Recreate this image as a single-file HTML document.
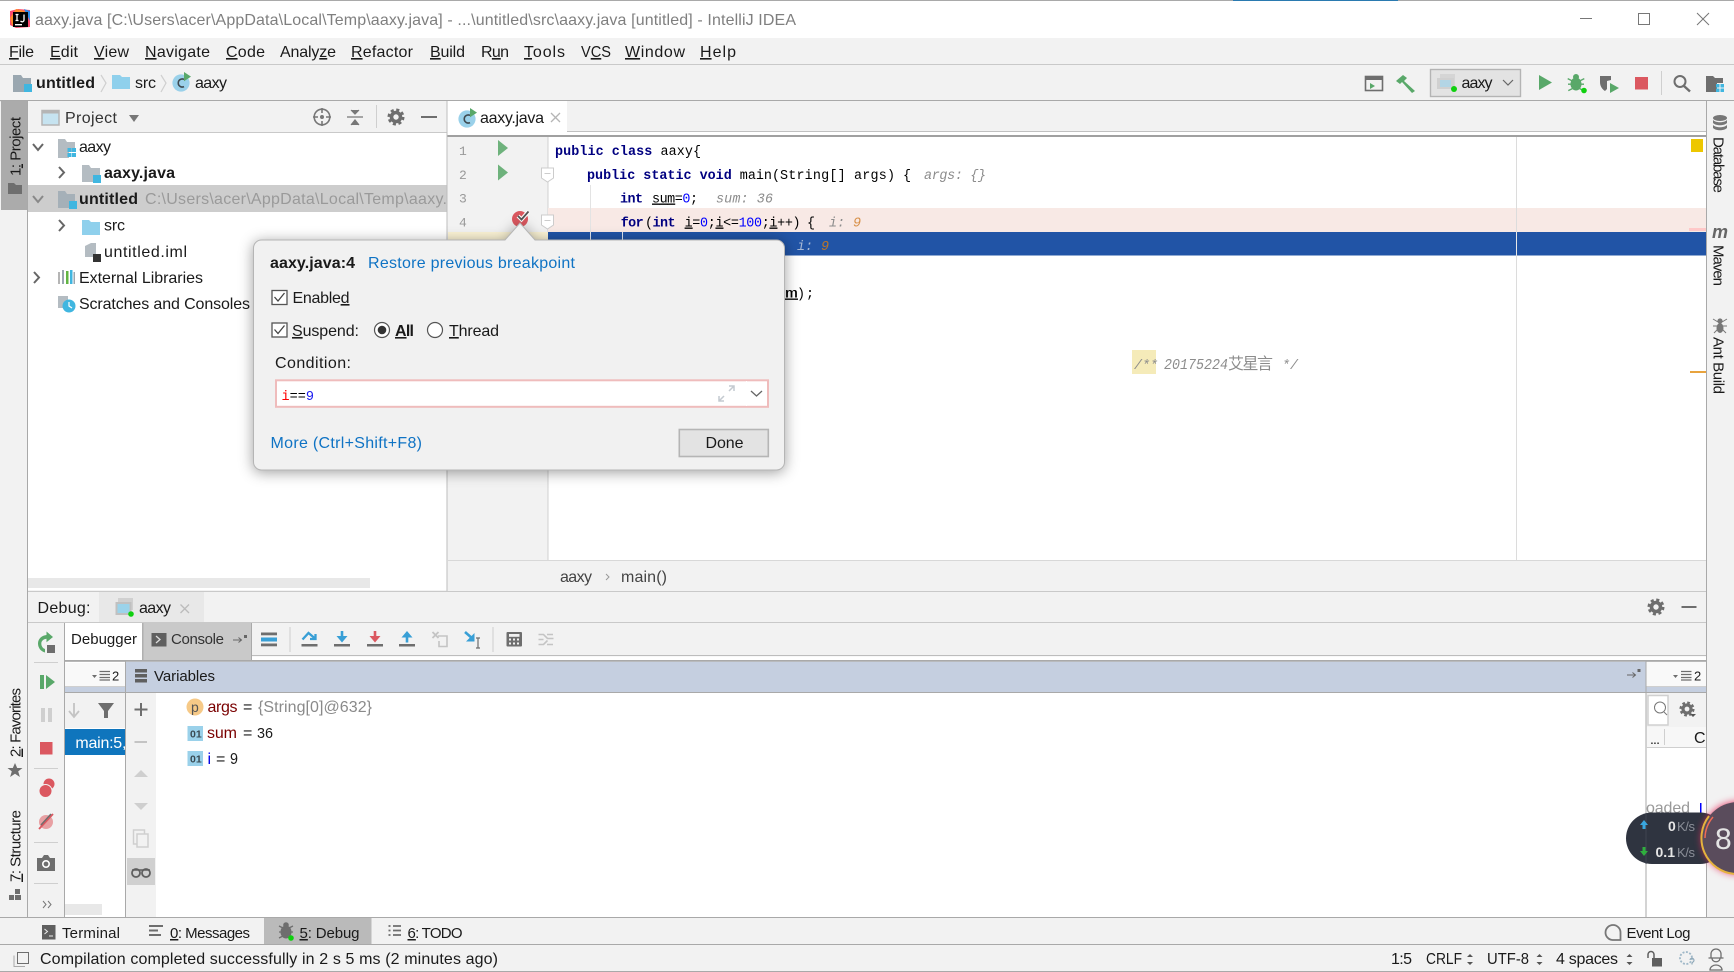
<!DOCTYPE html>
<html><head><meta charset="utf-8"><title>aaxy.java</title>
<style>
html,body{margin:0;padding:0;background:#f2f2f2;overflow:hidden}
svg{display:block}
text{font-family:"Liberation Sans","Noto Sans CJK SC",sans-serif;font-size:16px;fill:#1a1a1a;white-space:pre}
.m{font-family:"Liberation Mono","Noto Sans CJK SC",monospace;font-size:13.4px;fill:#000}
.k{font-weight:bold;fill:#000080}
.h{font-style:italic;fill:#8c8c8c}
.l{fill:#0f73c4}
.g{fill:#8a8a8a}
.u{text-decoration:underline}
.s{font-size:15px}
.ln{font-family:"Liberation Mono",monospace;font-size:13px;fill:#999}
</style></head><body>
<svg width="1734" height="972" viewBox="0 0 1734 972" xmlns="http://www.w3.org/2000/svg">
<defs>
<symbol id="gear" viewBox="-9 -9 18 18" overflow="visible"><circle r="4.5" fill="none" stroke="#6e6e6e" stroke-width="3.6"/><circle r="7" fill="none" stroke="#6e6e6e" stroke-width="3" stroke-dasharray="3 2.5"/></symbol>
<symbol id="c" viewBox="-10 -10 20 20" overflow="visible"><circle r="8.6" fill="#9ad1ea" cy="1"/><path d="M3 -2.6A4 4 0 1 0 3 4.6" fill="none" stroke="#3f4a50" stroke-width="1.6"/><path d="M3 -10l7 4.6-7 4.6z" fill="#59a869"/></symbol>
</defs>
<rect width="1734" height="972" fill="#f2f2f2"/>

<!-- Title bar -->
<rect width="1734" height="38" fill="#fff"/>
<rect width="1734" height="1" fill="#a9a9a9"/>
<rect x="1233" width="165" height="1" fill="#2a7ab0"/>
<g>
<path d="M10 11l8-2 12 1 0 17-14 1-6-3z" fill="#fc4a6f"/><path d="M10 18l6-9 9 2-8 16-5-2z" fill="#fe8a2a"/><path d="M24 9l6 2 0 10z" fill="#2f8ce8"/>
<rect x="13" y="12" width="15" height="15" fill="#000"/><rect x="15" y="24" width="7" height="1.4" fill="#fff"/>
<path d="M15.5 14.5h3M17 14.5v6M15.5 20.5h3M24 14.5v5.5a1.8 1.8 0 0 1-3.4.8" stroke="#fff" stroke-width="1.3" fill="none"/>
</g>
<text x="35" y="25" style="fill:#7f7f7f" textLength="761">aaxy.java [C:\Users\acer\AppData\Local\Temp\aaxy.java] - ...\untitled\src\aaxy.java [untitled] - IntelliJ IDEA</text>
<path d="M1580 18.5h12" stroke="#777" stroke-width="1"/>
<rect x="1638.5" y="13.5" width="11" height="11" fill="none" stroke="#777"/>
<path d="M1697 13l12 12M1709 13l-12 12" stroke="#777" stroke-width="1"/>

<!-- Menu -->
<g>
<text x="9" y="57" textLength="25"><tspan class="u">F</tspan>ile</text>
<text x="50" y="57" textLength="28"><tspan class="u">E</tspan>dit</text>
<text x="94" y="57" textLength="35"><tspan class="u">V</tspan>iew</text>
<text x="145" y="57" textLength="65"><tspan class="u">N</tspan>avigate</text>
<text x="226" y="57" textLength="39"><tspan class="u">C</tspan>ode</text>
<text x="280" y="57" textLength="56">Analy<tspan class="u">z</tspan>e</text>
<text x="351" y="57" textLength="62"><tspan class="u">R</tspan>efactor</text>
<text x="430" y="57" textLength="35"><tspan class="u">B</tspan>uild</text>
<text x="481" y="57" textLength="28">R<tspan class="u">u</tspan>n</text>
<text x="524" y="57" textLength="41"><tspan class="u">T</tspan>ools</text>
<text x="581" y="57" textLength="30" lengthAdjust="spacingAndGlyphs">V<tspan class="u">C</tspan>S</text>
<text x="625" y="57" textLength="60"><tspan class="u">W</tspan>indow</text>
<text x="700" y="57" textLength="36"><tspan class="u">H</tspan>elp</text>
</g>
<rect y="64" width="1734" height="1" fill="#c9c9c9"/>

<!-- Nav bar -->
<path d="M13 75h8l2 3h8v14H13z" fill="#9aa7b0"/><rect x="24" y="84" width="8" height="8" fill="#40b6e0"/>
<text x="36" y="88" style="font-weight:bold" textLength="59">untitled</text>
<path d="M101 75l5 8-5 9" fill="none" stroke="#cfcfcf" stroke-width="1.2"/>
<path d="M112 75h8l2 2h8v12h-18z" fill="#8fd0ec"/>
<text x="135" y="88" textLength="21">src</text>
<path d="M161 75l5 8-5 9" fill="none" stroke="#cfcfcf" stroke-width="1.2"/>
<use href="#c" x="171" y="72" width="20" height="20"/>
<text x="195" y="88" textLength="32">aaxy</text>

<!-- Nav right tools -->
<rect x="1365.5" y="76.5" width="17" height="14" fill="#f2f2f2" stroke="#6e6e6e" stroke-width="1.6"/><rect x="1365" y="76" width="18" height="4" fill="#6e6e6e"/><path d="M1370 83l5 3-5 3z" fill="#59a869"/>
<path d="M1396 81l7-6 4 3-3 3 11 10-3 2-10-11-2 2z" fill="#59a869"/>
<rect x="1430.5" y="69.5" width="90" height="27" fill="#e3e3e3" stroke="#b4b4b4" stroke-width="1.4"/>
<rect x="1440" y="74" width="15" height="13" fill="#d5d5d5"/><rect x="1437" y="78" width="17" height="11" fill="#d0d0d0"/><rect x="1440" y="80" width="11" height="7" fill="#b3d5e5"/>
<circle cx="1454" cy="89" r="3" fill="#0fd00f"/>
<text x="1461.5" y="88" textLength="31">aaxy</text>
<path d="M1503 80l5 5 5-5" fill="none" stroke="#666" stroke-width="1.2"/>
<path d="M1539 75l13 7.5-13 7.5z" fill="#59a869"/>
<g fill="#59a869"><ellipse cx="1576" cy="84" rx="5.5" ry="6.5"/><circle cx="1576" cy="77" r="3"/><path d="M1568 78l4 2-.6 1.2-4-2zM1584 78l-4 2 .6 1.2 4-2zM1568 83.500h4v1.400h-4zM1580 83.500h4v1.400h-4zM1568 90l4-2 .6 1.200-4 2zM1584 90l-4-2-.6 1.200 4 2z"/></g>
<circle cx="1584" cy="90.500" r="2.800" fill="#0fd00f"/>
<path d="M1600 76h11v4l-4 1v8l-2 2c-3-2-5-5-5-9z" fill="#6e6e6e"/><path d="M1610 83l9 5-9 5z" fill="#59a869"/>
<rect x="1635" y="77" width="13" height="12.500" fill="#db5860"/>
<rect x="1661" y="71" width="1" height="24" fill="#cfcfcf"/>
<circle cx="1680" cy="81.500" r="5.500" fill="none" stroke="#6e6e6e" stroke-width="2"/><path d="M1684 86l6 5.500" stroke="#6e6e6e" stroke-width="2.400"/>
<path d="M1706 76h7l2 2h8v5h-6v9h-11z" fill="#6e6e6e"/><rect x="1716" y="84" width="3.500" height="3.500" fill="#40b6e0"/><rect x="1720.500" y="84" width="3.500" height="3.500" fill="#40b6e0"/><rect x="1716" y="88.500" width="3.500" height="3.500" fill="#40b6e0"/><rect x="1720.500" y="88.500" width="3.500" height="3.500" fill="#40b6e0"/>
<rect y="100" width="1734" height="1.200" fill="#a9a9a9"/>

<!-- Left strip -->
<rect x="27" y="101" width="1" height="816" fill="#a9a9a9"/>
<rect x="1" y="101" width="26" height="109" fill="#ababab"/>
<text transform="translate(20.500,176) rotate(-90)" x="0" y="0" class="s" textLength="59">1<tspan class="u">:</tspan> Project</text>
<path d="M8 183h6l2 2h6v9H8z" fill="#6e6e6e"/>
<text transform="translate(20.500,757) rotate(-90)" class="s" textLength="69"><tspan class="u">2</tspan>: Favorites</text>
<path d="M15 763l2.200 5h5.300l-4.300 3.400 1.700 5.600-4.900-3.300-4.900 3.300 1.700-5.600-4.300-3.400h5.300z" fill="#6e6e6e"/>
<text transform="translate(20.500,882) rotate(-90)" class="s" textLength="72"><tspan class="u">7</tspan>: Structure</text>
<path d="M15 889h5v5h-5zM9 895h5v5H9zM15 895h6v5h-6z" fill="#6e6e6e"/>

<!-- Project panel -->
<rect x="28" y="101" width="419" height="31" fill="#f2f2f2"/>
<rect x="28" y="132" width="419" height="1.200" fill="#c9c9c9"/>
<rect x="42" y="110.500" width="17" height="14.500" fill="#c6e3f0" stroke="#b5b5b5" stroke-width="1.500"/><rect x="42" y="110.500" width="17" height="3" fill="#b5b5b5"/>
<text x="65" y="123" textLength="52" style="fill:#333">Project</text>
<path d="M129 115h10l-5 7z" fill="#777"/>
<circle cx="322" cy="117" r="7.800" fill="none" stroke="#777" stroke-width="1.600"/><circle cx="322" cy="117" r="2" fill="#777"/><path d="M322 108v5M322 121v5M313 117h5M326 117h5" stroke="#777" stroke-width="1.600"/>
<path d="M347 117h16M351 110l4 4 4-4M351 125l4-5 4 5" fill="#777" stroke="#777" stroke-width="1.200"/>
<rect x="376" y="105" width="1" height="23" fill="#cfcfcf"/>
<use href="#gear" x="387" y="108" width="18" height="18"/>
<rect x="421" y="116" width="16" height="2" fill="#6e6e6e"/>

<rect x="28" y="133" width="419" height="457" fill="#fff"/>
<rect x="28" y="185" width="419" height="27" fill="#cdcdcd"/>
<path d="M33 144l5 6 5-6" fill="none" stroke="#666" stroke-width="2"/>
<path d="M58 139h7l2 3h8v10h-6v6H58z" fill="#b4bcc2"/><rect x="67.500" y="148" width="4" height="4" fill="#40b6e0"/><rect x="72" y="148" width="4" height="4" fill="#40b6e0"/><rect x="67.500" y="153" width="4" height="4" fill="#40b6e0"/><rect x="72" y="153" width="4" height="4" fill="#40b6e0"/>
<text x="79" y="152" textLength="32">aaxy</text>
<path d="M59 167l5 5.500-5 5.500" fill="none" stroke="#666" stroke-width="2"/>
<path d="M82 165h7l2 3h9v14H82z" fill="#b4bcc2"/><rect x="93" y="175" width="8" height="8" fill="#40b6e0"/>
<text x="104" y="178" textLength="71" style="font-weight:bold">aaxy.java</text>
<path d="M33 196l5 6 5-6" fill="none" stroke="#888" stroke-width="2"/>
<path d="M58 191h7l2 3h8v14H58z" fill="#a5b0b8"/><rect x="69" y="201" width="8" height="8" fill="#40b6e0"/>
<text x="79" y="204" textLength="59" style="font-weight:bold">untitled</text>
<text x="145" y="204" style="fill:#9a9a9a" textLength="302">C:\Users\acer\AppData\Local\Temp\aaxy.</text>
<path d="M59 220l5 5.500-5 5.500" fill="none" stroke="#666" stroke-width="2"/>
<path d="M82 220h7l2 2h9v13H82z" fill="#8fd0ec"/>
<text x="104" y="230.500" textLength="21">src</text>
<path d="M85 246l6-3h5v14H85z" fill="#b4bcc2"/><rect x="93" y="254" width="8" height="8" fill="#333"/>
<text x="104" y="257" textLength="83">untitled.iml</text>
<path d="M34 272l5 5.500-5 5.500" fill="none" stroke="#666" stroke-width="2"/>
<g><rect x="58" y="272" width="2" height="12" fill="#b5b5b5"/><rect x="62" y="270" width="2" height="14" fill="#9aa7b0"/><rect x="66" y="271" width="2.500" height="13" fill="#62b543"/><rect x="70" y="270" width="2.500" height="14" fill="#40b6e0"/><rect x="73.500" y="272" width="1.500" height="12" fill="#9aa7b0"/></g>
<text x="79" y="283" textLength="124">External Libraries</text>
<path d="M58 296h10v12H58z" fill="#b4bcc2"/><circle cx="69" cy="306" r="6.500" fill="#40b6e0"/><path d="M69 302v4l3 2" stroke="#fff" fill="none" stroke-width="1.200"/>
<text x="79" y="309" textLength="171">Scratches and Consoles</text>
<rect x="28" y="578" width="342" height="10" fill="#e8e8e8"/>

<!-- Editor tabs -->
<rect x="447" y="101" width="1259" height="30" fill="#f2f2f2"/>
<rect x="447" y="131" width="1259" height="1" fill="#c0c0c0"/>
<rect x="447" y="132" width="1259" height="3" fill="#fff"/>
<rect x="447" y="135" width="1259" height="2" fill="#a0a0a0"/>
<rect x="447" y="101" width="120" height="34" fill="#fff"/>
<rect x="446.500" y="101" width="1" height="490" fill="#bdbdbd"/>
<use href="#c" x="457" y="108" width="20" height="20"/>
<text x="480" y="123" textLength="64">aaxy.java</text>
<path d="M551 113l9 9M560 113l-9 9" stroke="#b5b5b5" stroke-width="1.300"/>

<!-- Editor -->
<rect x="448" y="137" width="1258" height="423" fill="#fff"/>
<rect x="448" y="137" width="100" height="423" fill="#f2f2f2"/>
<rect x="547.500" y="137" width="1" height="423" fill="#d0d0d0"/>
<rect x="548" y="208" width="1158" height="24" fill="#f8e9e5"/>
<rect x="448" y="232" width="100" height="24" fill="#fbf3d5"/>
<rect x="548" y="232" width="1158" height="23.500" fill="#2154a6"/>
<rect x="1516" y="137" width="1" height="423" fill="#dcdcdc"/>
<rect x="1516" y="232" width="1" height="23.500" fill="#e8e8e8"/>
<rect x="590" y="185" width="1" height="47" fill="#e3e3e3"/>
<rect x="590" y="232" width="1" height="24" fill="#dfe6f2"/>
<rect x="622" y="232" width="1" height="24" fill="#dfe6f2"/>
<text x="459" y="155" class="ln">1</text><text x="459" y="179" class="ln">2</text><text x="459" y="202.500" class="ln">3</text><text x="459" y="226.500" class="ln">4</text>
<path d="M498 140l10 8-10 8zM498 164.500l10 8-10 8z" fill="#6eb27c"/>
<path d="M541.500 168h12v10l-6 4-6-4z" fill="#fff" stroke="#ccc"/><path d="M544.500 173.500h6" stroke="#ccc"/>
<path d="M541.500 215h12v10l-6 4-6-4z" fill="#fff" stroke="#ccc"/><path d="M544.500 220.500h6" stroke="#ccc"/>
<circle cx="520" cy="219" r="8" fill="#db5860"/>
<path d="M518 216l3.500 3.500 7-8" stroke="#fff" stroke-width="4" fill="none"/><path d="M518 216l3.500 3.500 7-8" stroke="#555" stroke-width="1.800" fill="none"/>

<text x="555" y="155" class="m" textLength="146"><tspan class="k">public class</tspan> aaxy{</text>
<text x="587" y="179" class="m" textLength="193"><tspan class="k">public static void</tspan> main(</text>
<text x="780" y="179" class="m" textLength="115">String[] args)</text>
<text x="903" y="179" class="m">{</text>
<text x="924" y="179" class="m h" textLength="62">args: {}</text>
<text x="620" y="202.500" class="m k" textLength="23">int</text>
<text x="652" y="202.500" class="m" textLength="46"><tspan class="u">sum</tspan>=<tspan style="fill:#00f">0</tspan>;</text>
<text x="716" y="202.500" class="m h" textLength="57">sum: 36</text>
<text x="620.700" y="226.500" class="m k" textLength="23">for</text>
<text x="645" y="226.500" class="m">(</text>
<text x="652.500" y="226.500" class="m k" textLength="23">int</text>
<text x="684.600" y="226.500" class="m" textLength="116"><tspan class="u">i</tspan>=<tspan style="fill:#00f">0</tspan>;<tspan class="u">i</tspan>&lt;=<tspan style="fill:#00f">100</tspan>;<tspan class="u">i</tspan>++)</text>
<text x="807" y="226.500" class="m">{</text>
<text x="829" y="226.500" class="m h">i:</text><text x="853" y="226.500" class="m h" style="fill:#d8914a">9</text>
<text x="797" y="250" class="m h" style="fill:#a8b8d4">i:</text><text x="821" y="250" class="m h" style="fill:#b8752c">9</text>
<text x="785" y="297.500" class="m u" textLength="13" lengthAdjust="spacingAndGlyphs">m</text><text x="797" y="297.500" class="m">)</text><text x="806" y="297.500" class="m">;</text>
<rect x="1132" y="350" width="24" height="24" fill="#f5ebb9"/>
<text x="1134" y="369" class="m h" textLength="24">/**</text>
<text x="1164" y="369" class="m h" style="font-size:15px" textLength="64" lengthAdjust="spacingAndGlyphs">20175224</text>
<text x="1228" y="369" style="font-size:16px;fill:#8c8c8c" textLength="45">艾星言</text>
<text x="1282" y="369" class="m h" textLength="16">*/</text>

<!-- stripe -->
<rect x="1691" y="139" width="12" height="13" fill="#edc700"/>
<rect x="1689" y="228" width="17" height="3" fill="#ffc8c8"/>
<rect x="1690" y="371" width="16" height="2" fill="#e8a33d"/>

<!-- Breadcrumb -->
<rect x="448" y="560" width="1258" height="31" fill="#f2f2f2"/>
<rect x="448" y="560" width="1258" height="1" fill="#d8d8d8"/>
<text x="560" y="582" textLength="32" style="fill:#444">aaxy</text>
<path d="M606 574l3 3-3 3" fill="none" stroke="#999"/>
<text x="621" y="582" textLength="46" style="fill:#444">main()</text>

<!-- Right strip -->
<rect x="1706" y="101" width="1" height="816" fill="#a9a9a9"/>
<rect x="1707" y="101" width="27" height="816" fill="#f2f2f2"/>
<g fill="#777"><ellipse cx="1720" cy="118" rx="7" ry="3"/><path d="M1713 120c3 3 11 3 14 0v3c-3 3-11 3-14 0zM1713 125c3 3 11 3 14 0v3c-3 3-11 3-14 0z"/></g>
<text transform="translate(1713.500,137) rotate(90)" class="s" textLength="56">Database</text>
<text x="1712" y="238" style="font:italic bold 18px 'Liberation Sans';fill:#666" textLength="17">m</text>
<text transform="translate(1713.500,245) rotate(90)" class="s" textLength="41">Maven</text>
<g fill="#777"><ellipse cx="1720" cy="328" rx="3.500" ry="5"/><circle cx="1720" cy="321" r="2.600"/><path d="M1713 319l5 3M1727 319l-5 3M1713 326h5M1727 326h-5M1714 333l4-4M1726 333l-4-4" stroke="#777"/></g>
<text transform="translate(1713.500,337) rotate(90)" class="s" textLength="57">Ant Build</text>

<!-- Debug header -->
<rect x="28" y="591" width="1678" height="1" fill="#c9c9c9"/>
<rect x="28" y="622" width="1678" height="1" fill="#c9c9c9"/>
<text x="37.500" y="613" textLength="53">Debug:</text>
<rect x="99" y="592" width="105" height="30" fill="#e8e8e8"/>
<rect x="118" y="598" width="15" height="12" fill="#d0d0d0"/><rect x="115.500" y="602" width="16" height="13" fill="#c0c0c0"/><rect x="117.500" y="604" width="12" height="9" fill="#9bd3ea"/><circle cx="131" cy="614" r="2.800" fill="#0fd00f"/>
<text x="139" y="613" textLength="32">aaxy</text>
<path d="M180.500 604.500l8.500 8.500M189 604.500l-8.500 8.500" stroke="#bbb" stroke-width="1.300"/>
<use href="#gear" x="1647" y="598" width="18" height="18"/>
<rect x="1681.500" y="606" width="15" height="2" fill="#6e6e6e"/>

<!-- Debug tool column -->
<rect x="64" y="623" width="1" height="294" fill="#a9a9a9"/>
<path d="M53 637l-6.500-5.500v3.500c-5 .5-8.500 4-8.500 8.500s3 8 7 9v-3.500c-2.300-.7-3.700-3-3.700-5.500s2-4.500 5.200-4.800v3.600z" fill="#59a869"/>
<rect x="47" y="645" width="8" height="8" fill="#6e6e6e"/>
<rect x="34" y="662" width="24" height="1" fill="#cfcfcf"/>
<rect x="40" y="675" width="4" height="14" fill="#59a869"/><path d="M46 675l9 7-9 7z" fill="#59a869"/>
<rect x="41" y="708" width="4" height="14" fill="#cfcfcf"/><rect x="48" y="708" width="4" height="14" fill="#cfcfcf"/>
<rect x="40" y="742" width="12.500" height="12.500" fill="#db5860"/>
<rect x="34" y="768" width="24" height="1" fill="#cfcfcf"/>
<circle cx="49" cy="784" r="5.500" fill="#db5860"/><circle cx="45.500" cy="791" r="6.500" fill="#db5860" stroke="#f2f2f2"/>
<circle cx="46" cy="822" r="7" fill="#e8a0a3"/><path d="M39 829l14-15" stroke="#db5860" stroke-width="1.800"/><path d="M41 825l10-11" stroke="#6e6e6e" stroke-width="1.500"/>
<rect x="34" y="842" width="24" height="1" fill="#cfcfcf"/>
<path d="M37 858h5l2-3h4l2 3h5v13H37z" fill="#6e6e6e"/><circle cx="46" cy="864" r="3.200" fill="none" stroke="#fff" stroke-width="1.600"/>
<rect x="34" y="883" width="24" height="1" fill="#cfcfcf"/>
<path d="M43 901l3 3.500-3 3.500M48 901l3 3.500-3 3.500" fill="none" stroke="#777"/>

<!-- Debugger tabs -->
<rect x="65" y="623" width="77" height="38" fill="#fff"/>
<text x="71" y="644" class="s" textLength="66">Debugger</text>
<rect x="142" y="623" width="109.500" height="37" fill="#c9c9c9"/>
<rect x="142" y="623" width="1.500" height="37" fill="#b0b0b0"/><rect x="251" y="623" width="1" height="37" fill="#a9a9a9"/>
<rect x="151.500" y="633" width="15" height="13.500" fill="#5f5f5f"/><path d="M156 636l4 3.500-4 3.500" fill="none" stroke="#ddd" stroke-width="1.300"/>
<text x="171" y="644" class="s" textLength="53" style="fill:#333">Console</text>
<path d="M233 640h8M238.500 637.500l3 2.500-3 2.500" fill="none" stroke="#666"/><rect x="244" y="635" width="3" height="3" fill="#666"/>
<rect x="261" y="632.500" width="16" height="2.800" fill="#6e6e6e"/><rect x="261" y="637.500" width="16" height="4" fill="#389fd6"/><rect x="261" y="643.500" width="16" height="2.800" fill="#6e6e6e"/>
<rect x="289.500" y="627" width="1" height="25" fill="#cfcfcf"/>
<path d="M302.500 639.500l6-6.500 6 5M310 639h5.500v-5" fill="none" stroke="#389fd6" stroke-width="2.300"/><rect x="301.500" y="644" width="16" height="2.500" fill="#6e6e6e"/>
<path d="M342 631v7.500" stroke="#389fd6" stroke-width="2.600"/><path d="M336.500 636h11l-5.500 6.500z" fill="#389fd6"/><rect x="334" y="644" width="16" height="2.500" fill="#6e6e6e"/>
<path d="M375 631v7.500" stroke="#db5860" stroke-width="2.600"/><path d="M369.500 636h11l-5.500 6.500z" fill="#db5860"/><rect x="367" y="644" width="16" height="2.500" fill="#6e6e6e"/>
<path d="M407 642.500v-7.500" stroke="#389fd6" stroke-width="2.600"/><path d="M401.500 637.500h11l-5.500-6.500z" fill="#389fd6"/><rect x="399" y="644" width="16" height="2.500" fill="#6e6e6e"/>
<path d="M432.500 632l6 6M438.500 632l-6 6" stroke="#c4c4c4" stroke-width="1.800"/><path d="M438 636h9v10.500h-8v-5.500" fill="none" stroke="#c4c4c4" stroke-width="1.600"/>
<path d="M465 632l8 7" stroke="#389fd6" stroke-width="2.600"/><path d="M474.500 633v8.500h-8.500z" fill="#389fd6"/><path d="M476 638h4M476 648h4M478 638v10" stroke="#6e6e6e" stroke-width="1.200"/>
<rect x="492.500" y="627" width="1" height="25" fill="#cfcfcf"/>
<rect x="506.500" y="632" width="15.500" height="14.500" rx="1" fill="#6e6e6e"/><rect x="509" y="634" width="10.500" height="2.800" fill="#f2f2f2"/><path d="M509 638.500h2v2h-2zM513 638.500h2v2h-2zM517 638.500h2v2h-2zM509 642.500h2v2h-2zM513 642.500h2v2h-2zM517 642.500h2v2h-2z" fill="#f2f2f2"/>
<path d="M538.500 634.500h5l4 4h6M538.500 639.500h5M538.500 644.500h5l4-4M553 634.500h-6M553 644.500h-6" fill="none" stroke="#c4c4c4" stroke-width="1.600"/>
<rect x="252" y="655" width="1454" height="1.200" fill="#bdbdbd"/>
<rect x="252" y="656.200" width="1454" height="4" fill="#fff"/>
<rect x="65" y="660" width="1641" height="1.800" fill="#a9a9a9"/>

<!-- Frames + variables panes -->
<rect x="65" y="662" width="60" height="25" fill="#f9f9f9"/>
<rect x="65" y="662" width="60" height="1" fill="#fff"/>
<rect x="65" y="686" width="60" height="1" fill="#cfcfcf"/>
<rect x="65" y="687" width="60" height="5" fill="#c5cfe0"/>
<rect x="125" y="661.800" width="1521" height="30.200" fill="#c5cfe0"/>
<rect x="65" y="692" width="1641" height="1" fill="#a9a9a9"/>
<path d="M92 675h5l-2.500 3z" fill="#6e6e6e"/>
<path d="M99.500 671.500h10.500M99.500 674.500h10.500M99.500 677.500h10.500M99.500 680h10.500" stroke="#6e6e6e" stroke-width="1.200"/>
<text x="112" y="680.500" style="font-size:13px" textLength="6.500">2</text>
<rect x="135" y="669" width="12" height="3.500" fill="#5f5f5f"/><rect x="135" y="674" width="12" height="3.500" fill="#5f5f5f"/><rect x="135" y="679" width="12" height="3.500" fill="#5f5f5f"/>
<text x="154" y="681" class="s" textLength="61">Variables</text>
<path d="M1627 675h8M1632.500 672.500l3 2.500-3 2.500" fill="none" stroke="#666"/><rect x="1637.500" y="669" width="3" height="3" fill="#666"/>

<rect x="65" y="693" width="60" height="224" fill="#fff"/>
<rect x="65" y="693" width="60" height="35" fill="#f2f2f2"/>
<path d="M74 703v14M69 711l5 6 5-6" fill="none" stroke="#c4c4c4" stroke-width="1.800"/>
<path d="M98 703h16l-6 8v7h-4v-7z" fill="#6e6e6e"/>
<rect x="65" y="729" width="60" height="26" fill="#0f75bd"/>
<svg x="65" y="729" width="60" height="26"><text x="10.400" y="19" style="fill:#fff" textLength="51">main:5,</text></svg>
<rect x="65" y="904" width="37" height="11" fill="#e8e8e8"/>
<rect x="125" y="661" width="1" height="256" fill="#a9a9a9"/>
<rect x="126" y="693" width="30" height="224" fill="#f2f2f2"/>
<rect x="156" y="693" width="1490" height="224" fill="#fff"/>
<path d="M141 703v13M134.500 709.500h13" stroke="#6e6e6e" stroke-width="2"/>
<path d="M134.500 742h12.500" stroke="#c4c4c4" stroke-width="2"/>
<path d="M134 777l7-7 7 7z" fill="#cfcfcf"/><path d="M134 803l7 7 7-7z" fill="#cfcfcf"/>
<rect x="133.500" y="830" width="11" height="14" fill="none" stroke="#cfcfcf" stroke-width="1.500"/><rect x="137" y="834" width="11" height="13" fill="#f2f2f2" stroke="#cfcfcf" stroke-width="1.500"/>
<rect x="127" y="858" width="28" height="27" fill="#d0d0d0"/>
<circle cx="136" cy="873" r="4" fill="none" stroke="#5f5f5f" stroke-width="1.800"/><circle cx="146" cy="873" r="4" fill="none" stroke="#5f5f5f" stroke-width="1.800"/><path d="M132 870h18" stroke="#5f5f5f" stroke-width="1.400"/>

<circle cx="195" cy="707" r="8.500" fill="#f6c987"/><text x="191" y="712" style="font-size:14px;fill:#555">p</text>
<text x="207.500" y="712" textLength="30" style="fill:#7a0000">args</text>
<text x="243" y="712">=</text>
<text x="258" y="712" textLength="114" style="fill:#8a8a8a">{String[0]@632}</text>
<rect x="187.500" y="726" width="15.500" height="15" fill="#9ad1ea"/><text x="190" y="737.500" style="font-size:10.500px;font-weight:bold;fill:#3a4a52">01</text>
<text x="207" y="738" textLength="30" style="fill:#7a0000">sum</text><text x="243" y="738">=</text><text x="257" y="738" style="font-size:15px" textLength="16" lengthAdjust="spacingAndGlyphs">36</text>
<rect x="187.500" y="751" width="15.500" height="15" fill="#9ad1ea"/><text x="190" y="762.500" style="font-size:10.500px;font-weight:bold;fill:#3a4a52">01</text>
<text x="207.500" y="764" style="fill:#0000e6">i</text><text x="216" y="764">=</text><text x="230" y="764" textLength="8" lengthAdjust="spacingAndGlyphs">9</text>

<!-- right debug pane -->
<rect x="1646" y="662" width="60" height="255" fill="#fff"/>
<rect x="1646" y="662" width="60" height="25" fill="#f9f9f9"/>
<rect x="1646" y="686" width="60" height="1" fill="#cfcfcf"/>
<rect x="1646" y="687" width="60" height="5" fill="#c5cfe0"/>
<rect x="1646" y="692" width="60" height="1" fill="#a9a9a9"/>
<rect x="1645.500" y="661" width="1" height="256" fill="#a9a9a9"/>
<path d="M1673 675h5l-2.500 3z" fill="#6e6e6e"/>
<path d="M1681 671.500h10.500M1681 674.500h10.500M1681 677.500h10.500M1681 680h10.500" stroke="#6e6e6e" stroke-width="1.200"/>
<text x="1694" y="680.500" style="font-size:13px" textLength="6.500">2</text>
<rect x="1646.500" y="693" width="59.500" height="34" fill="#f2f2f2"/>
<rect x="1648" y="695.500" width="20" height="29.500" fill="#fff" stroke="#d0d0d0" stroke-width="1.500"/>
<circle cx="1660" cy="707.500" r="5.500" fill="none" stroke="#777"/><path d="M1664 712l3 3" stroke="#777"/>
<use href="#gear" x="1679" y="701" width="16" height="16"/><path d="M1690 714h6l-3 3z" fill="#555"/>
<rect x="1646.500" y="727" width="59.500" height="20" fill="#f7f7f7"/><rect x="1646" y="747" width="60" height="1" fill="#cfcfcf"/>
<rect x="1664" y="729" width="1" height="16" fill="#cfcfcf"/>
<text x="1650" y="744" style="font-size:14px" textLength="10">...</text>
<svg x="1646" y="727" width="60" height="20"><text x="48" y="16">Co</text></svg>
<text x="1646" y="813" style="fill:#999" textLength="44">oaded</text><rect x="1700" y="803" width="1.500" height="11" fill="#00f"/>

<!-- Net widget -->
<rect x="1626" y="812.500" width="100" height="51.500" rx="26" fill="#2f3440"/>
<rect x="1645.500" y="813" width="1" height="51" fill="#3f4450"/>
<g style="filter:drop-shadow(0 0 4px #e8305f)"><circle cx="1738" cy="838" r="36" fill="#5a4c5c"/></g>
<path d="M1709 816a36 36 0 0 0 26 58" fill="none" stroke="#e5b33d" stroke-width="2"/>
<path d="M1705 838a33 33 0 0 1 8-21" fill="none" stroke="#ee6b55" stroke-width="1.500"/>
<text x="1715" y="849" style="font-size:30px;fill:#e4e4e4" textLength="17">8</text>
<path d="M1644 820l4 5h-2.500v4h-3v-4H1640z" fill="#39a7e0"/>
<path d="M1644 856l4-5h-2.500v-4h-3v4H1640z" fill="#2fae3e"/>
<text x="1668" y="831" style="font-size:14px;font-weight:bold;fill:#e6e6e6" textLength="7.500">0</text>
<text x="1677" y="831" style="font-size:13px;fill:#8b8f98" textLength="18">K/s</text>
<text x="1655.500" y="857" style="font-size:14px;font-weight:bold;fill:#e6e6e6" textLength="19.500">0.1</text>
<text x="1677" y="857" style="font-size:13px;fill:#8b8f98" textLength="18">K/s</text>

<!-- Tool bar bottom -->
<rect y="917" width="1734" height="1" fill="#a9a9a9"/>
<rect y="944" width="1734" height="1" fill="#a9a9a9"/>
<rect y="971" width="1734" height="1" fill="#a9a9a9"/>
<rect x="264" y="918" width="107.500" height="26" fill="#bababa"/>
<rect x="42" y="925" width="13.500" height="14.500" fill="#5f5f5f"/><path d="M44.500 929l3 2.500-3 2.500M49 936h4" stroke="#eee" fill="none"/>
<text x="62" y="938" class="s" textLength="58">Terminal</text>
<path d="M149 926h14M149 930.500h9M149 935h12" stroke="#6e6e6e" stroke-width="2"/>
<text x="170" y="938" class="s" textLength="80"><tspan class="u">0</tspan>: Messages</text>
<ellipse cx="286" cy="932" rx="5.500" ry="6.500" fill="#6e6e6e"/><circle cx="286" cy="925" r="2.800" fill="#6e6e6e"/><path d="M279 926l4 2M293 926l-4 2M279 932h4M293 932h-4M279 938l4-2M293 938l-4-2" stroke="#6e6e6e" stroke-width="1.300"/><circle cx="291" cy="938" r="2.800" fill="#0fd00f"/>
<text x="299.500" y="938" class="s" textLength="60"><tspan class="u">5</tspan>: Debug</text>
<path d="M388.500 926h2M393 926h8M388.500 930.500h2M393 930.500h8M388.500 935h2M393 935h8" stroke="#6e6e6e" stroke-width="1.800"/>
<text x="407.500" y="938" class="s" textLength="55"><tspan class="u">6</tspan>: TODO</text>
<path d="M1620.500 940h-8a7.500 7.500 0 1 1 8-7.500z" fill="none" stroke="#777" stroke-width="1.800"/>
<text x="1626.500" y="938" class="s" textLength="64">Event Log</text>

<!-- Status -->
<rect x="17.500" y="952.500" width="11" height="11" fill="none" stroke="#6e6e6e"/>
<path d="M14 955.500v11h11" fill="none" stroke="#aaa"/>
<text x="40" y="964" textLength="458">Compilation completed successfully in 2 s 5 ms (2 minutes ago)</text>
<text x="1391" y="964" textLength="21">1:5</text>
<text x="1426" y="964" textLength="36" lengthAdjust="spacingAndGlyphs">CRLF</text><path d="M1467 957l3-3 3 3zM1467 962l3 3 3-3z" fill="#555"/>
<text x="1487" y="964" textLength="42" lengthAdjust="spacingAndGlyphs">UTF-8</text><path d="M1536.500 957l3-3 3 3zM1536.500 962l3 3 3-3z" fill="#555"/>
<text x="1556" y="964" textLength="62">4 spaces</text><path d="M1626.500 957l3-3 3 3zM1626.500 962l3 3 3-3z" fill="#555"/>
<rect x="1652" y="958" width="10" height="8.500" fill="#5f5f5f"/><path d="M1648 958v-3.500a3 3 0 0 1 6 0v3.500" fill="none" stroke="#5f5f5f" stroke-width="1.500"/>
<circle cx="1686" cy="958" r="6" fill="none" stroke="#9fb8c8" stroke-width="1.800" stroke-dasharray="2 1.500"/><path d="M1690 960a2 2 0 1 1 3 2l-1 1v1.500" fill="none" stroke="#8fa8b8" stroke-width="1.200"/>
<g fill="none" stroke="#6e6e6e" stroke-width="1.300"><path d="M1711 958v-4a5 5 0 0 1 10 0v4zM1708.500 958h15M1712 958c0 5 8 5 8 0M1710 970c0-3 3-5 6-5s6 2 6 5z"/></g>

<!-- Popup -->
<g style="filter:drop-shadow(0 2px 7px rgba(0,0,0,.38))">
<path d="M261.500 240H505L520 223 535 240H776.500a8 8 0 0 1 8 8V462a8 8 0 0 1-8 8H261.500a8 8 0 0 1-8-8V248a8 8 0 0 1 8-8z" fill="#f1f1f1" stroke="#b5b5b5"/>
</g>
<text x="270" y="268" textLength="85" style="font-weight:bold">aaxy.java:4</text>
<text x="368" y="268" textLength="207" style="fill:#0f73c4">Restore previous breakpoint</text>
<rect x="272" y="290.500" width="15" height="14" fill="#fff" stroke="#555" stroke-width="1.300"/><path d="M274.500 297l3.500 4 6.500-8" fill="none" stroke="#444" stroke-width="1.300"/>
<text x="292.500" y="303" textLength="57">Enable<tspan class="u">d</tspan></text>
<rect x="272" y="323" width="15" height="14" fill="#fff" stroke="#555" stroke-width="1.300"/><path d="M274.500 329.500l3.500 4 6.500-8" fill="none" stroke="#444" stroke-width="1.300"/>
<text x="292" y="336" textLength="67"><tspan class="u">S</tspan>uspend:</text>
<circle cx="382" cy="330" r="7.500" fill="#fff" stroke="#555" stroke-width="1.200"/><circle cx="382" cy="330" r="4.300" fill="#333"/>
<text x="395" y="336" textLength="19" style="font-weight:bold"><tspan class="u">A</tspan>ll</text>
<circle cx="435" cy="330" r="7.500" fill="#fff" stroke="#555" stroke-width="1.200"/>
<text x="449" y="336" textLength="50"><tspan class="u">T</tspan>hread</text>
<text x="275" y="368" textLength="76">Condition:</text>
<rect x="276" y="380.300" width="492" height="26.500" fill="#fff" stroke="#efbcbc" stroke-width="2"/>
<text x="281.500" y="400" class="m" style="font-size:13.500px"><tspan style="fill:#f00">i</tspan>==<tspan style="fill:#1a1af0">9</tspan></text>
<path d="M719 401l5-5M729 391l5-5M719 396v5h5M734 391v-5h-5" fill="none" stroke="#c4cad0" stroke-width="1.500"/>
<rect x="746" y="381" width="1" height="25" fill="#fff"/>
<path d="M751 391l5.500 5 5.500-5" fill="none" stroke="#666" stroke-width="1.300"/>
<text x="270.500" y="448" textLength="151.500" style="fill:#0f73c4">More (Ctrl+Shift+F8)</text>
<rect x="679.300" y="429.500" width="89" height="27" fill="#e3e3e3" stroke="#b5b5b5" stroke-width="1.600"/>
<text x="705.500" y="448" textLength="38">Done</text>
</svg>
</body></html>
